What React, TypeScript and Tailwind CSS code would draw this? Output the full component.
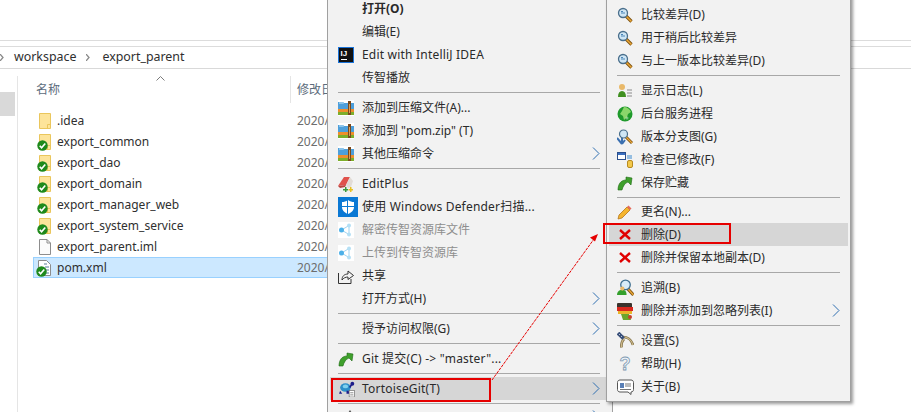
import type { ReactNode } from 'react'

type MenuRow =
  | { sep: true; h?: string }
  | { label: string; icon?: ReactNode; arrow?: boolean; bold?: boolean; muted?: boolean; hot?: boolean; wide?: boolean }

function Svg({ children, size = 16 }: { children: ReactNode; size?: number }) {
  return (
    <svg width={size} height={size} viewBox="0 0 16 16" className="block shrink-0">
      {children}
    </svg>
  )
}

function Check() {
  return (
    <svg width="11" height="11" viewBox="0 0 12 12" className="absolute left-[-2px] top-[6px]">
      <circle cx="6" cy="6" r="5.7" fill="#1f8a1c" />
      <path d="M3 6.200l2 2.200 4-4.600" fill="none" stroke="#fff" strokeWidth="1.800" />
    </svg>
  )
}

function FolderIcon({ ok }: { ok?: boolean }) {
  return (
    <div className="relative h-4 w-3">
      <svg width="12" height="16" viewBox="0 0 12 16" className="block">
        <path d="M.5.5h11v15H.5z" fill="#fde49a" stroke="#eac65c" />
        <path d="M8.500 15.500v-4h3" fill="none" stroke="#eac65c" />
      </svg>
      {ok && <Check />}
    </div>
  )
}

function FileIcon() {
  return (
    <svg width="12" height="16" viewBox="0 0 12 16" className="block">
      <path d="M.5.5h7.500l3.500 3.500v11.500H.5z" fill="#fbfbfb" stroke="#8d8d8d" />
      <path d="M8 .5V4h3.500" fill="none" stroke="#8d8d8d" />
    </svg>
  )
}

function XmlIcon() {
  return (
    <div className="relative -ml-px h-4 w-[13px]">
      <svg width="13" height="16" viewBox="0 0 13 16" className="block">
        <path d="M.5.5h8l4 4v11H.5z" fill="#fff" stroke="#8d8d8d" />
        <path d="M6 4h3M7 7h4M7 10h4M7 13h4" stroke="#5b7f9b" />
      </svg>
      <Check />
    </div>
  )
}

function IdeaIcon() {
  return (
    <svg width="16" height="16" viewBox="0 0 16 16" className="block">
      <rect x=".5" y=".5" width="15" height="15" fill="#111" stroke="#1a73d9" />
      <text x="2.500" y="9" fill="#fff" fontSize="8" fontWeight="700" fontFamily="Liberation Sans, sans-serif">
        IJ
      </text>
      <rect x="3" y="12" width="6" height="1" fill="#fff" />
    </svg>
  )
}

function RarIcon() {
  return (
    <Svg>
      <rect width="16" height="16" fill="#fff" />
      <path d="M0 2h5l1 1h10v6H0z" fill="#4d9fdb" />
      <path d="M1 2h4l1 2H1z" fill="#8cc4ea" />
      <rect y="9" width="16" height="3" fill="#ee8f2c" />
      <rect y="12" width="16" height="3" fill="#7dae2b" />
      <rect x="10" y="1" width="3" height="14" fill="#7a4a1e" />
      <rect x="11" y="4" width="1" height="9" fill="#d9a05a" />
    </Svg>
  )
}

function EditPlusIcon() {
  return (
    <Svg>
      <path d="M0 10L6 1h6l-4 8z" fill="#e0524c" />
      <path d="M8 9l4-8 3 4-2 6-3 1z" fill="#e2dcd6" />
      <path d="M0 10l8-1-1 2-5 1z" fill="#b9443f" />
      <path d="M5 13h2v-2h1.500v2h1.500v1.500H8.500V16H7v-1.500H5z" fill="#3c9a3c" />
      <path d="M10.500 13h1.500v-2h1.500v2H15v1.500h-1.500V16H12v-1.500h-1.500z" fill="#e8c020" />
    </Svg>
  )
}

function DefenderIcon() {
  return (
    <svg width="20" height="20" viewBox="0 0 20 20" className="block">
      <rect width="20" height="20" fill="#0a78d4" />
      <path d="M10 3c2 1.500 4 2 6 2v5c0 3.500-2.500 5.500-6 7-3.500-1.500-6-3.500-6-7V5c2 0 4-.5 6-2z" fill="#fff" />
      <path d="M9.500 3v14M4 9.500h12" stroke="#0a78d4" />
    </svg>
  )
}

function NodesIcon() {
  return (
    <Svg>
      <rect width="16" height="16" fill="#fff" />
      <path d="M3.500 8L11 3.500M3.500 8l7.500 4.500M11 3.500v9" stroke="#9fd5f2" />
      <circle cx="3.500" cy="8" r="2.500" fill="#4cb0e8" />
      <circle cx="11" cy="3.500" r="2" fill="#b5e0f5" />
      <circle cx="11" cy="12.500" r="2" fill="#b5e0f5" />
    </Svg>
  )
}

function ShareIcon() {
  return (
    <Svg>
      <path d="M.5 5v10.500H13V11" fill="none" stroke="#333" />
      <path d="M4 12c0-4 2.500-6 6-6V3l5.500 4.500L10 11.500V9c-2.500 0-4.500 1-6 3z" fill="none" stroke="#333" />
    </Svg>
  )
}

function GreenArrow() {
  return (
    <Svg>
      <path d="M1 15c0-6 3-10 8-10V2l6 1-1 7-3-3c-3 1-5 4-6 8z" fill="#3fa02c" stroke="#1e6a14" strokeWidth=".6" />
    </Svg>
  )
}

function TurtleIcon() {
  return (
    <Svg size={17}>
      <ellipse cx="7" cy="7" rx="5" ry="4" fill="#2c8fc9" />
      <ellipse cx="7" cy="6" rx="2.500" ry="1.800" fill="#7fd0ee" />
      <path d="M2 10l-1 3h3zM8 10v3h3l-1-3z" fill="#1d1d8a" />
      <circle cx="13.500" cy="3.500" r="1.800" fill="#1d1d8a" />
      <path d="M11 7l2-3" stroke="#1d1d8a" strokeWidth="1.500" />
      <rect x="10.500" y="10" width="5" height="6" fill="#fff" stroke="#666" strokeWidth=".6" />
      <path d="M11.500 12h3M11.500 14h3" stroke="#666" strokeWidth=".7" />
    </Svg>
  )
}

function LensIcon() {
  return (
    <Svg>
      <path d="M9 9l5.500 5.500" stroke="#7a4f0e" strokeWidth="3.200" />
      <path d="M9 9l5.500 5.500" stroke="#eba838" strokeWidth="1.500" />
      <circle cx="6" cy="6" r="4.500" fill="#cfe6f5" stroke="#4a6f8c" strokeWidth="1.300" />
      <path d="M4 6h4M4 4.500h2" stroke="#4a86b8" />
    </Svg>
  )
}

function LogIcon() {
  return (
    <Svg>
      <circle cx="5" cy="4" r="3" fill="#e9b96a" />
      <path d="M1 14c0-4 1.500-6 4-6s4 2 4 6z" fill="#3f8f1f" />
      <path d="M10 7h5M10 10h5M10 13h5" stroke="#8a8a8a" />
    </Svg>
  )
}

function GlobeIcon() {
  return (
    <Svg>
      <circle cx="8" cy="8" r="7.500" fill="#1f9a2c" />
      <path d="M7 1c3 0 6 2 7 5l-3 2-1 3-3 3-1-4-3-2 2-3z" fill="#8bd66a" />
      <circle cx="10" cy="12" r="1.500" fill="#fff" fillOpacity=".4" />
    </Svg>
  )
}

function BranchIcon() {
  return (
    <Svg>
      <path d="M5 7v8M5 15L0 9M5 15l3-4" stroke="#3a6fb0" strokeWidth="2" fill="none" />
      <path d="M9 8l6 6" stroke="#7a4f0e" strokeWidth="3" />
      <path d="M9 8l6 6" stroke="#eba838" strokeWidth="1.300" />
      <circle cx="6.500" cy="5" r="4" fill="#cfe6f5" stroke="#4a6f8c" strokeWidth="1.200" />
    </Svg>
  )
}

function ModifiedIcon() {
  return (
    <Svg>
      <rect x=".5" y=".5" width="8" height="7" fill="#fff" stroke="#2b4f8c" />
      <rect x="1" y="1" width="7" height="2" fill="#3a6fc0" />
      <path d="M10 4h5M10 6h5" stroke="#3a8ad0" />
      <rect x="10.500" y="8.500" width="5" height="7" rx="1.500" fill="#f3c84a" stroke="#b88a20" />
    </Svg>
  )
}

function PencilIcon() {
  return (
    <Svg>
      <path d="M2 11l8-8 3 3-8 8-4 1z" fill="#f5b52e" stroke="#b5761a" strokeWidth=".8" />
      <path d="M10 3l1.500-1.500 3 3L13 6z" fill="#e66a5a" />
    </Svg>
  )
}

function RedX() {
  return (
    <Svg>
      <path d="M3 3l10 9M13 3L3 12" stroke="#e00000" strokeWidth="2.400" />
    </Svg>
  )
}

function BlameIcon() {
  return (
    <Svg size={17}>
      <path d="M10 9l5.500 6" stroke="#7a4f0e" strokeWidth="3" />
      <path d="M10 9l5.500 6" stroke="#eba838" strokeWidth="1.300" />
      <path d="M0 15c0-3 2-5 5-5s4 2 4 5z" fill="#34a02c" />
      <circle cx="8" cy="5.500" r="4.500" fill="#d8ecf8" stroke="#3f6f90" strokeWidth="1.200" />
      <circle cx="5" cy="9" r="2" fill="#e9b96a" />
    </Svg>
  )
}

function IgnoreIcon() {
  return (
    <svg width="18" height="18" viewBox="0 0 18 18" className="block">
      <rect y="1" width="15" height="5" rx="1" fill="#3b332d" />
      <rect y="5" width="16" height="4" fill="#d9281e" />
      <rect x="1" y="9" width="14" height="3" fill="#e8b52a" />
      <path d="M4 12h8l2 6H6z" fill="#6aa52c" />
      <circle cx="13" cy="15" r="2" fill="#c8402c" />
    </svg>
  )
}

function SettingsIcon() {
  return (
    <svg width="17" height="17" viewBox="0 0 17 17" className="block">
      <path d="M5 5c5-.5 9.500 2.500 11 8" fill="none" stroke="#7d6c42" strokeWidth="2.600" />
      <path d="M5 5c5-.5 9.500 2.500 11 8" fill="none" stroke="#cdb98a" strokeWidth="1.200" />
      <path d="M7 7c-2 2-3 4.500-2.500 8.500" fill="none" stroke="#7d6c42" strokeWidth="2.600" />
      <path d="M7 7c-2 2-3 4.500-2.500 8.500" fill="none" stroke="#cdb98a" strokeWidth="1.200" />
      <path d="M1 1l5.500 5.500" stroke="#39507a" strokeWidth="3.800" />
      <path d="M2 2l1 1M4 4l1 1" stroke="#b7c4d8" />
    </svg>
  )
}

function HelpIcon() {
  return (
    <svg width="16" height="20" viewBox="0 0 16 20" className="block">
      <text
        x="8"
        y="16"
        textAnchor="middle"
        fontSize="18"
        fontWeight="700"
        fontFamily="Liberation Sans, sans-serif"
        fill="#eef4f9"
        stroke="#7d98b0"
        strokeWidth=".8"
      >
        ?
      </text>
    </svg>
  )
}

function AboutIcon() {
  return (
    <svg width="17" height="16" viewBox="0 0 17 16" className="block">
      <path d="M3 1h11c1.500 0 2.500 1 2.500 2.500v7c0 1.500-1 2.500-2.500 2.500v2.500L11 13H3c-1.500 0-2.500-1-2.500-2.500v-7C.5 2 1.500 1 3 1z" fill="#fff" stroke="#555" />
      <rect x="3" y="4" width="4" height="5" fill="#5a7fb5" />
      <path d="M8 5h6M8 7h6M3 10.500h11" stroke="#777" />
    </svg>
  )
}

function StubIcon() {
  return (
    <Svg>
      <path d="M10 3l2-3 2 3z" fill="#555" />
    </Svg>
  )
}

function Chevron() {
  return (
    <svg width="8" height="13" viewBox="0 0 8 13" className="block shrink-0 fill-none stroke-[#2f6fb0]">
      <path d="M1 .5l6 6-6 6" />
    </svg>
  )
}

const mainRows: MenuRow[] = [
  { label: '打开(O)', bold: true },
  { label: '编辑(E)' },
  { label: 'Edit with IntelliJ IDEA', icon: <IdeaIcon />, wide: true },
  { label: '传智播放' },
  { sep: true },
  { label: '添加到压缩文件(A)...', icon: <RarIcon /> },
  { label: '添加到 "pom.zip" (T)', icon: <RarIcon /> },
  { label: '其他压缩命令', icon: <RarIcon />, arrow: true },
  { sep: true },
  { label: 'EditPlus', icon: <EditPlusIcon />, wide: true },
  { label: '使用 Windows Defender扫描...', icon: <DefenderIcon />, wide: true },
  { label: '解密传智资源库文件', icon: <NodesIcon />, muted: true },
  { label: '上传到传智资源库', icon: <NodesIcon />, muted: true },
  { label: '共享', icon: <ShareIcon /> },
  { label: '打开方式(H)', arrow: true },
  { sep: true },
  { label: '授予访问权限(G)', arrow: true },
  { sep: true },
  { label: 'Git 提交(C) -> "master"...', icon: <GreenArrow />, wide: true },
  { sep: true },
  { label: 'TortoiseGit(T)', icon: <TurtleIcon />, arrow: true, hot: true, wide: true },
  { sep: true },
  { label: '', icon: <StubIcon />, arrow: true },
]

const subRows: MenuRow[] = [
  { label: '比较差异(D)', icon: <LensIcon /> },
  { label: '用于稍后比较差异', icon: <LensIcon /> },
  { label: '与上一版本比较差异(D)', icon: <LensIcon /> },
  { sep: true },
  { label: '显示日志(L)', icon: <LogIcon /> },
  { label: '后台服务进程', icon: <GlobeIcon /> },
  { label: '版本分支图(G)', icon: <BranchIcon /> },
  { label: '检查已修改(F)', icon: <ModifiedIcon /> },
  { label: '保存贮藏', icon: <GreenArrow /> },
  { sep: true, h: 'h-[6px]' },
  { label: '更名(N)...', icon: <PencilIcon /> },
  { label: '删除(D)', icon: <RedX />, hot: true },
  { label: '删除并保留本地副本(D)', icon: <RedX /> },
  { sep: true },
  { label: '追溯(B)', icon: <BlameIcon /> },
  { label: '删除并添加到忽略列表(I)', icon: <IgnoreIcon />, arrow: true },
  { sep: true },
  { label: '设置(S)', icon: <SettingsIcon /> },
  { label: '帮助(H)', icon: <HelpIcon /> },
  { label: '关于(B)', icon: <AboutIcon /> },
]

function Rows({ rows, sepClass, arrowClass }: { rows: MenuRow[]; sepClass: string; arrowClass: string }) {
  return (
    <>
      {rows.map((row, i) => {
        if ('sep' in row) {
          return (
            <div key={i} className={`flex items-center ${row.h ?? 'h-[7px]'} ${sepClass}`}>
              <div className="h-px w-full bg-[#a8a8a8]" />
            </div>
          )
        }
        return (
          <div
            key={i}
            className={`flex h-[23px] ${row.label ? 'items-center' : 'items-start pt-[3px]'} ${arrowClass} ${
              row.hot ? 'bg-[#d6d6d6]' : ''
            }`}
          >
            <div className="flex h-4 w-[32px] shrink-0 items-center pl-2">{row.icon}</div>
            <span
              className={`flex-1 whitespace-nowrap ${row.bold ? 'font-bold' : ''} ${row.wide ? 'tracking-[0.2px]' : ''} ${
                row.muted ? 'text-[#8e8e8e]' : 'text-[#2a2a2a]'
              }`}
            >
              {row.label}
            </span>
            {row.arrow && <Chevron />}
          </div>
        )
      })}
    </>
  )
}

const files = [
  { name: '.idea', icon: <FolderIcon /> },
  { name: 'export_common', icon: <FolderIcon ok /> },
  { name: 'export_dao', icon: <FolderIcon ok /> },
  { name: 'export_domain', icon: <FolderIcon ok /> },
  { name: 'export_manager_web', icon: <FolderIcon ok /> },
  { name: 'export_system_service', icon: <FolderIcon ok /> },
  { name: 'export_parent.iml', icon: <FileIcon /> },
  { name: 'pom.xml', icon: <XmlIcon />, selected: true },
]

function Explorer() {
  return (
    <div className="flex h-full flex-col text-[12px] text-[#2f2f2f]">
      <div className="h-[41px] shrink-0 border-b border-[#dcdcdc]" />
      <div className="h-[6px] shrink-0 border-b border-[#dcdcdc]" />
      <div className="flex h-[22px] shrink-0 items-center border-b border-[#d9d9d9] text-[12.4px]">
        <svg width="4" height="7" viewBox="0 0 4 7" className="mr-[10px] fill-none stroke-[#8a8a8a]">
          <path d="M0 0l3 3.500L0 7" strokeWidth="1.300" />
        </svg>
        <span>workspace</span>
        <svg width="4" height="7" viewBox="0 0 4 7" className="ml-[10px] mr-3 fill-none stroke-[#8a8a8a]">
          <path d="M0 0l3 3.500L0 7" strokeWidth="1.300" />
        </svg>
        <span>export_parent</span>
      </div>
      <div className="flex min-h-0 flex-1 pt-[7px]">
        <div className="h-full w-[18px] shrink-0 border-r border-[#e5e5e5] pt-4">
          <div className="h-6 w-[15px] bg-[#d9d9d9]" />
        </div>
        <div className="flex w-[315px] shrink-0 flex-col pl-[15px]">
          <div className="relative flex h-[27px] shrink-0 items-center pl-[3px] text-[#5c6c7c]">
            <span className="w-[254px] shrink-0 pt-[1px]">名称</span>
            <div className="h-full w-px shrink-0 bg-[#e5e5e5]" />
            <span className="ml-[6px] shrink-0 whitespace-nowrap">修改日期</span>
            <svg width="9" height="5" viewBox="0 0 9 5" className="absolute left-[123px] top-0 fill-none stroke-[#7a7a7a]">
              <path d="M.5 4.500l4-4 4 4" />
            </svg>
          </div>
          <div className="h-[7px] shrink-0" />
          {files.map((f) => (
            <div
              key={f.name}
              className={`flex h-[21px] shrink-0 items-center border pl-[5px] ${
                f.selected ? 'border-[#99d1ff] bg-[#cce8ff]' : 'border-transparent'
              }`}
            >
              <div className="w-[18px] shrink-0">{f.icon}</div>
              <span className="w-[240px] shrink-0">{f.name}</span>
              <span className="text-[#6d6d6d]">2020/</span>
            </div>
          ))}
        </div>
      </div>
    </div>
  )
}

export default function App() {
  return (
    <div className="relative h-[412px] w-[911px] overflow-hidden bg-white font-['Noto_Sans','Noto_Sans_CJK_SC',sans-serif] text-[12px]">
      <Explorer />

      {/* context menu */}
      <div className="absolute left-[327px] top-[-10px] h-[440px] w-[286px] border-x border-[#a0a0a0] bg-[#f2f2f2] px-[2px] pt-[7px]">
        <Rows rows={mainRows} sepClass="pl-2 pr-[10px]" arrowClass="pr-[10px]" />
      </div>

      {/* TortoiseGit submenu */}
      <div className="absolute left-[606px] top-[-10px] w-[245px] border border-[#a0a0a0] bg-[#f2f2f2] px-[2px] pb-[3px] pt-[12px] shadow-[2px_2px_3px_rgba(0,0,0,0.4)]">
        <Rows rows={subRows} sepClass="pl-2 pr-[8px]" arrowClass="pr-[8px]" />
      </div>

      {/* annotation boxes and arrow */}
      <div className="absolute left-[331px] top-[378px] h-[24px] w-[160px] border-2 border-[#e60000]" />
      <div className="absolute left-[603px] top-[223px] h-[21px] w-[128px] border-2 border-[#e60000]" />
      <svg width="911" height="412" viewBox="0 0 911 412" className="pointer-events-none absolute left-0 top-0">
        <path d="M492 380L594 239" stroke="#e60000" strokeWidth="1" strokeDasharray="3 1" />
        <path d="M598 234l-8 3.500 5 4z" fill="#e60000" />
      </svg>
    </div>
  )
}
